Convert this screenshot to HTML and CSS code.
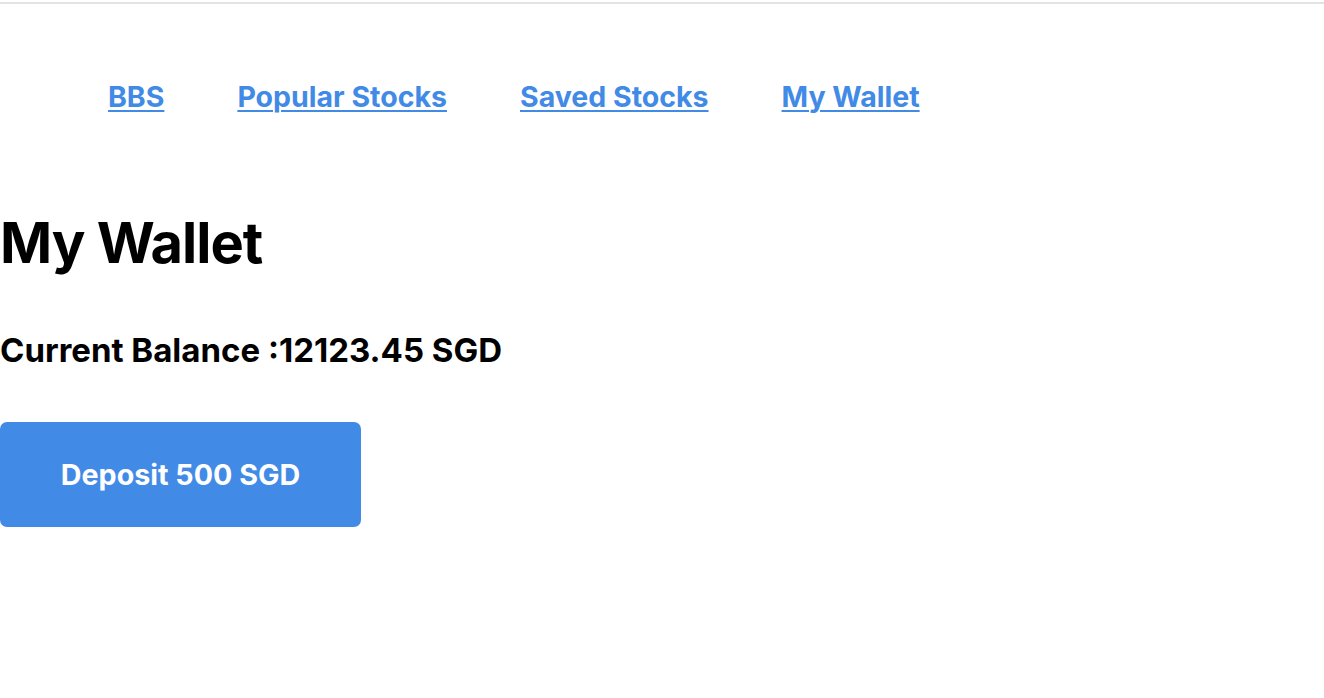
FILE: index.html
```html
<!DOCTYPE html>
<html>
<head>
<meta charset="utf-8">
<link rel="stylesheet" href="styles.css">
</head>
<body>
<div class="topline"></div>
<nav class="nav">
  <a href="#">BBS</a>
  <a href="#">Popular Stocks</a>
  <a href="#">Saved Stocks</a>
  <a href="#">My Wallet</a>
</nav>
<main class="wallet">
  <h1 class="title">My Wallet</h1>
  <h2 class="balance">Current Balance :12123.45 SGD</h2>
  <button class="deposit">Deposit 500 SGD</button>
</main>
</body>
</html>
```
FILE: styles.css
```css
html, body {
  margin: 0;
  padding: 0;
  background: #ffffff;
  font-family: Inter, "Noto Sans", sans-serif;
  color: #000;
}
.topline {
  height: 2px;
  margin-top: 2px;
  background: #e3e3e3;
}
.nav {
  display: flex;
  gap: 73px;
  padding: 0 0 0 108px;
  margin-top: 72px;
  height: 40px;
  align-items: center;
}
.nav a {
  color: #418ae6;
  font-size: 28.5px;
  font-weight: 700;
  text-decoration: underline;
  text-underline-offset: 3px;
  text-decoration-thickness: 2px;
}
.wallet {
  padding-top: 97px;
}
.title {
  margin: 0;
  font-size: 56px;
  font-weight: 700;
  line-height: 60px;
  letter-spacing: -1px;
}
.balance {
  margin: 57px 0 0;
  font-size: 33px;
  font-weight: 700;
  line-height: 40px;
}
.deposit {
  display: block;
  margin-top: 52px;
  width: 361px;
  height: 105px;
  border: none;
  border-radius: 7px;
  background: #418ae6;
  color: #fff;
  font-family: Inter, "Noto Sans", sans-serif;
  font-size: 28.7px;
  font-weight: 700;
  padding: 0;
}
```
